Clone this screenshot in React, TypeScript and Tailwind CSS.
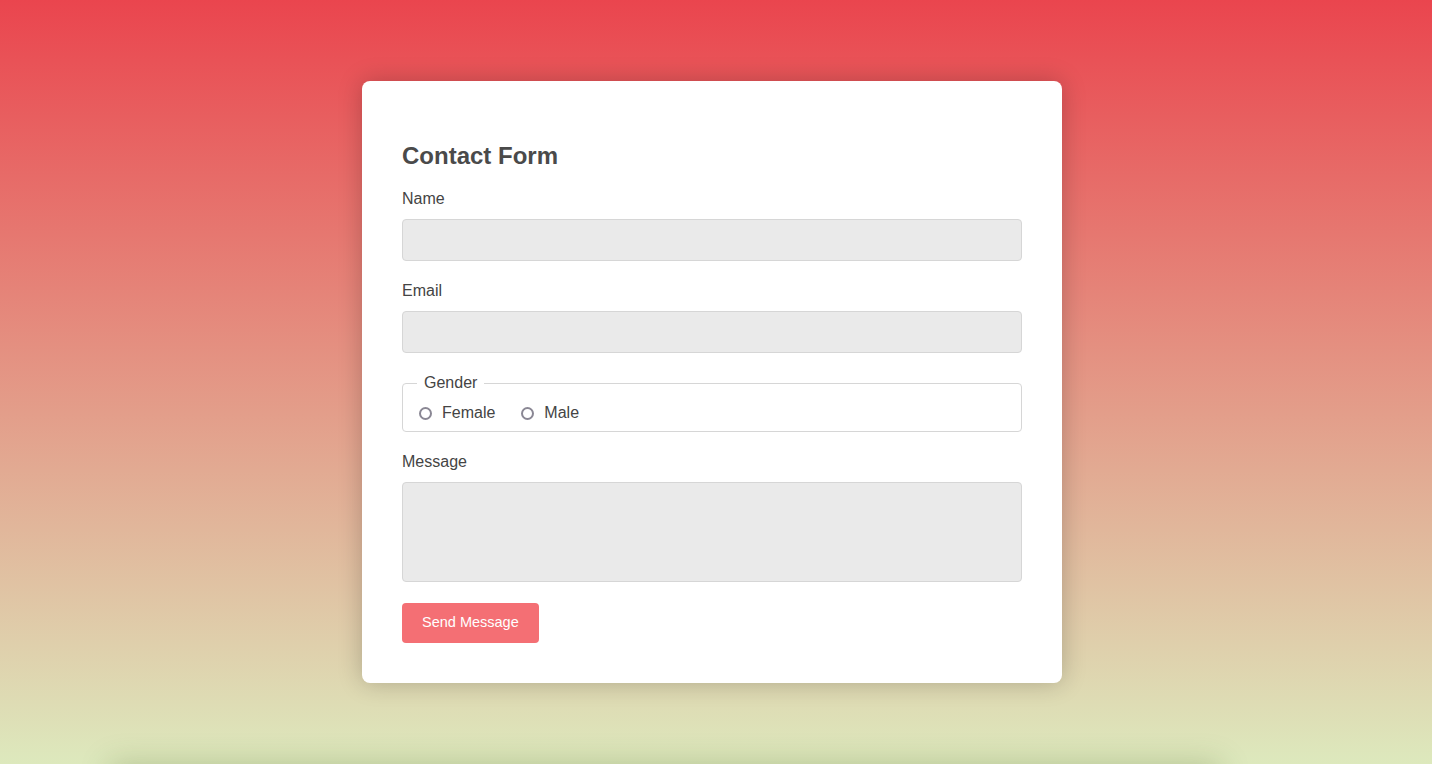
import React from "react";

const font = { fontFamily: '"Liberation Sans", Arial, Helvetica, sans-serif' };

function Field({ label }: { label: string }) {
  return (
    <div className="mb-5 flex flex-col">
      <label className="mb-[10px] text-[16px] leading-5 text-[#444]">{label}</label>
      <input
        type="text"
        className="h-[42px] w-full rounded-[4px] border border-[#d6d6d6] bg-[#eaeaea] outline-none"
      />
    </div>
  );
}

function Radio({ label }: { label: string }) {
  return (
    <label className="flex items-center text-[16px] leading-5 text-[#444]">
      <span className="ml-[2px] mr-[10px] block h-[13px] w-[13px] rounded-full border-2 border-[#8a8794] bg-white" />
      {label}
    </label>
  );
}

export default function App() {
  return (
    <div
      className="h-[764px] overflow-hidden bg-linear-to-b/srgb from-[#ea454e] to-[#dde9bd]"
      style={font}
    >
      <section className="flex h-[764px] items-center justify-center pr-[8px]">
        <form className="w-[700px] rounded-[8px] bg-white px-10 pt-[60px] pb-10 shadow-[0_0_24px_rgba(0,0,0,0.22)]">
          <h2 className="mb-[18px] text-[24px] leading-[30px] font-bold text-[#4a4a4a]">
            Contact Form
          </h2>
          <Field label="Name" />
          <Field label="Email" />
          <fieldset className="mb-5 rounded-[4px] border border-[#d6d6d6] px-[14px] pt-[10px] pb-[8px]">
            <legend className="px-[7px] text-[16px] leading-5 text-[#444]">Gender</legend>
            <div className="flex items-center gap-[24px]">
              <Radio label="Female" />
              <Radio label="Male" />
            </div>
          </fieldset>
          <div className="mb-[21px] flex flex-col">
            <label className="mb-[10px] text-[16px] leading-5 text-[#444]">Message</label>
            <textarea className="h-[100px] w-full resize-none rounded-[4px] border border-[#d6d6d6] bg-[#eaeaea] outline-none" />
          </div>
          <button
            type="button"
            className="h-10 rounded-[4px] bg-[#f46f74] px-5 text-[14.5px] font-medium text-white"
          >
            Send Message
          </button>
        </form>
      </section>
      <div className="ml-[110px] h-10 w-[1110px] shadow-[0_0_30px_rgba(60,80,20,0.25)]" />
    </div>
  );
}
